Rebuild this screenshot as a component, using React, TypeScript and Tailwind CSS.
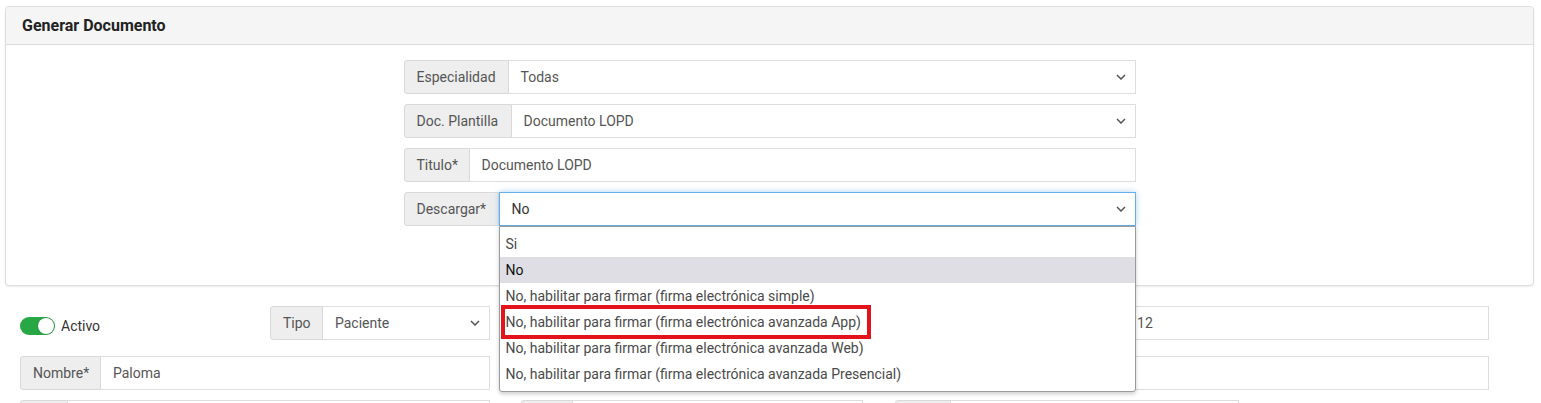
import React from "react";

const Chevron = () => (
  <svg width="10" height="6" viewBox="0 0 10 6" className="shrink-0">
    <path d="M1 1 L5 5 L9 1" fill="none" stroke="#555" strokeWidth="1.5" />
  </svg>
);

function Group({
  label,
  labelW,
  value,
  select,
  focused,
  className = "",
  children,
}: {
  label: string;
  labelW: string;
  value?: string;
  select?: boolean;
  focused?: boolean;
  className?: string;
  children?: React.ReactNode;
}) {
  return (
    <div className={"relative flex h-[34px] " + className}>
      <div
        className={
          "flex shrink-0 items-center rounded-l-[3px] border border-[#d9d9d9] bg-[#eeeeee] pl-[12px] text-[14px] text-[#555] " +
          labelW
        }
      >
        {label}
      </div>
      <div
        className={
          "flex min-w-0 flex-1 items-center justify-between border pl-[12px] pr-[9px] text-[14px] " +
          (focused
            ? "border-[#66afe9] text-[#333] shadow-[0_0_6px_rgba(102,175,233,0.55)]"
            : "border-l-0 border-[#dddddd] text-[#555]")
        }
      >
        <span className="whitespace-nowrap">{value}</span>
        {select && <Chevron />}
      </div>
      {children}
    </div>
  );
}

const options = [
  "Si",
  "No",
  "No, habilitar para firmar (firma electrónica simple)",
  "No, habilitar para firmar (firma electrónica avanzada App)",
  "No, habilitar para firmar (firma electrónica avanzada Web)",
  "No, habilitar para firmar (firma electrónica avanzada Presencial)",
];

export default function App() {
  return (
    <div
      className="relative h-[403px] w-[1541px] overflow-hidden bg-white"
      style={{ fontFamily: "Roboto, 'Liberation Sans', sans-serif" }}
    >
      {/* Card */}
      <div className="ml-[5px] mr-[7px] mt-[6px] rounded-[4px] border border-[#dddddd] bg-white shadow-[0_1px_2px_rgba(0,0,0,0.08)]">
        <div className="flex h-[38px] items-center rounded-t-[4px] border-b border-[#dddddd] bg-[#f5f5f5] pl-[16px] pt-[1px] text-[16px] font-bold text-[#222]">
          Generar Documento
        </div>
        <div className="relative z-10 flex flex-col items-center gap-[10px] pb-[59px] pt-[15px]">
          <Group
            className="w-[732px]"
            label="Especialidad"
            labelW="w-[105px]"
            value="Todas"
            select
          />
          <Group
            className="w-[732px]"
            label="Doc. Plantilla"
            labelW="w-[108px]"
            value="Documento LOPD"
            select
          />
          <Group
            className="w-[732px]"
            label="Titulo*"
            labelW="w-[66px]"
            value="Documento LOPD"
          />
          <Group
            className="w-[732px]"
            label="Descargar*"
            labelW="w-[95px]"
            value="No"
            select
            focused
          >
            {/* Dropdown list */}
            <div className="absolute left-[95px] top-[34px] z-20 w-[637px] rounded-b-[3px] border border-[#9a9a9a] bg-white py-[4px] shadow-[0_2px_4px_rgba(0,0,0,0.2)]">
              {options.map((o, i) => (
                <div
                  key={o}
                  className={
                    "flex h-[26px] items-center whitespace-nowrap pl-[6px] text-[14px] " +
                    (i === 1 ? "bg-[#dfdee4] text-[#111]" : "text-[#4a4a4a]")
                  }
                >
                  {o}
                </div>
              ))}
              <div className="pointer-events-none absolute left-[1px] top-[78px] h-[34px] w-[370px] border-[4px] border-[#e3131b]" />
            </div>
          </Group>
        </div>
      </div>

      {/* Patient form below */}
      <div className="pl-[20px]">
        <div className="mt-[20px] flex">
          <div className="flex w-[220px] items-center gap-[6px] pt-[6px]">
            <div className="flex h-[18px] w-[35px] items-center justify-end rounded-full bg-[#28a745] pr-[1px]">
              <div className="h-[16px] w-[16px] rounded-full bg-white shadow-[0_0_2px_rgba(0,0,0,0.3)]" />
            </div>
            <span className="text-[14px] text-[#333]">Activo</span>
          </div>
          <Group
            className="ml-[30px] w-[220px]"
            label="Tipo"
            labelW="w-[53px]"
            value="Paciente"
            select
          />
          <Group
            className="ml-[30px] w-[342px]"
            label=""
            labelW="w-[52px]"
            value=""
            select
          />
          <Group
            className="ml-[32px] w-[595px]"
            label="Dirección"
            labelW="w-[93px]"
            value="Avenida Constitución, 12"
          />
        </div>
        <div className="mt-[16px] flex">
          <Group
            className="w-[470px]"
            label="Nombre*"
            labelW="w-[81px]"
            value="Paloma"
          />
          <Group
            className="ml-[30px] w-[342px]"
            label=""
            labelW="w-[80px]"
            value=""
          />
          <Group
            className="ml-[32px] w-[595px]"
            label=""
            labelW="w-[60px]"
            value=""
          />
        </div>
        <div className="mt-[10px] flex">
          <Group className="w-[470px]" label="" labelW="w-[48px]" value="" />
          <Group
            className="ml-[31px] w-[342px]"
            label=""
            labelW="w-[52px]"
            value=""
          />
          <Group
            className="ml-[32px] w-[344px]"
            label=""
            labelW="w-[56px]"
            value=""
          />
        </div>
      </div>
    </div>
  );
}
